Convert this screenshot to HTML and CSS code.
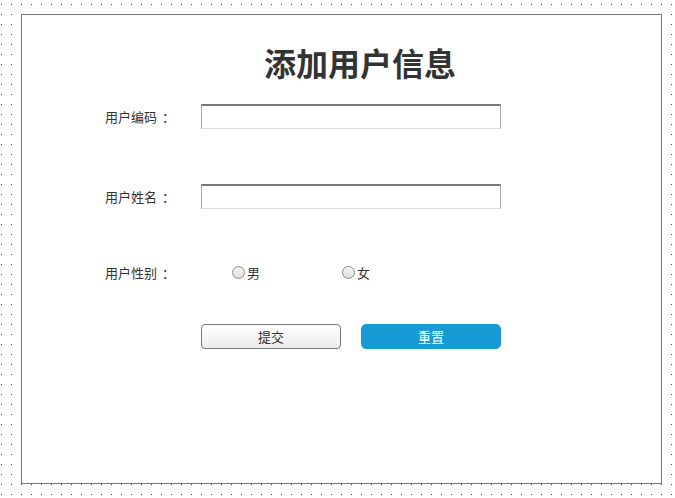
FILE: index.html
```html
<!DOCTYPE html>
<html lang="zh">
<head>
<meta charset="utf-8">
<title>添加用户信息</title>
<link rel="stylesheet" href="styles.css">
</head>
<body>
<div class="page">
  <div class="card">
    <h1 class="title">添加用户信息</h1>
    <form class="form">
      <div class="row row-code">
        <label class="label" for="code">用户编码<span class="colon">：</span></label>
        <input class="field" id="code" type="text">
      </div>
      <div class="row row-name">
        <label class="label" for="name">用户姓名<span class="colon">：</span></label>
        <input class="field" id="name" type="text">
      </div>
      <div class="row row-sex">
        <span class="label">用户性别<span class="colon">：</span></span>
        <div class="options">
          <label class="option"><input class="radio" type="radio" name="sex">男</label>
          <label class="option"><input class="radio" type="radio" name="sex">女</label>
        </div>
      </div>
      <div class="row row-actions">
        <button class="btn btn-submit" type="button">提交</button>
        <button class="btn btn-reset" type="button">重置</button>
      </div>
    </form>
  </div>
</div>
</body>
</html>
```

FILE: styles.css
```css
html, body {
  margin: 0;
  padding: 0;
}
body {
  width: 675px;
  height: 498px;
  overflow: hidden;
  background-color: #ffffff;
  background-image: conic-gradient(from 270deg at 1px 1px, #3030f0 90deg, transparent 0);
  background-size: 10px 10px;
  background-position: 1px 4px;
  font-family: "Noto Sans CJK SC", "Noto Sans", sans-serif;
  color: #333333;
}
.page {
  padding: 14px 0 0 21px;
}
.card {
  box-sizing: border-box;
  width: 641px;
  height: 470px;
  border: 1px solid #797979;
  background: #ffffff;
}
.title {
  margin: 29px 0 0 242px;
  font-size: 32px;
  line-height: 36px;
  font-weight: 700;
  color: #333333;
}
.form {
  display: flex;
  flex-direction: column;
  padding-left: 83px;
}
.row {
  display: flex;
  align-items: center;
  height: 25px;
}
.row-code { margin-top: 24px; }
.row-name { margin-top: 55px; }
.row-sex { margin-top: 51px; }
.row-actions { margin-top: 39px; padding-left: 96px; gap: 20px; }
.label {
  width: 96px;
  font-size: 13px;
  line-height: 25px;
  color: #333333;
}
.colon {
  display: inline-block;
  padding-left: 5px;
}
.field {
  box-sizing: border-box;
  width: 300px;
  height: 25px;
  margin: 0;
  border-style: solid;
  border-width: 2px 1px 1px 1px;
  border-color: #7a7a7a #a9a9a9 #dcdcdc #a9a9a9;
  background: #ffffff;
  padding: 0 4px;
  font-family: inherit;
  font-size: 13px;
  outline: none;
}
.options {
  display: flex;
  padding-left: 30px;
}
.option {
  display: flex;
  align-items: center;
  width: 110px;
  font-size: 13px;
  color: #333333;
}
.radio {
  appearance: none;
  -webkit-appearance: none;
  box-sizing: border-box;
  width: 13px;
  height: 13px;
  margin: 0 2px 0 1px;
  border: 1px solid #8a8a8a;
  border-radius: 50%;
  background: linear-gradient(#f4f4f4, #dedede);
}
.btn {
  box-sizing: border-box;
  width: 140px;
  height: 25px;
  margin: 0;
  padding: 0;
  font-family: inherit;
  font-size: 13px;
  line-height: 23px;
  cursor: pointer;
}
.btn-submit {
  border: 1px solid #797979;
  border-radius: 4px;
  background: linear-gradient(#ffffff, #ececec);
  color: #333333;
}
.btn-reset {
  border: 1px solid #169bd5;
  border-radius: 5px;
  background: #169bd5;
  color: #ffffff;
}
```
